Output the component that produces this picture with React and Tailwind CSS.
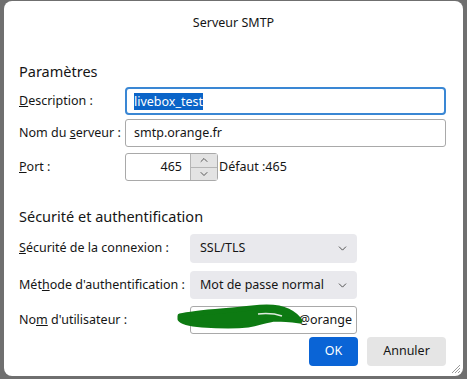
import { ChevronDown, ChevronUp } from "lucide-react";

/* ---------- small pieces ---------- */
const Label = ({ children, width = "w-[106px]" }) => (
  <div className={`${width} shrink-0 whitespace-nowrap text-[12.5px] text-[#151515]`}>{children}</div>
);

const TextBox = ({ value, className = "" }) => (
  <div
    className={`h-[28px] flex items-center px-[8px] bg-white border border-[#a9a9a9] rounded-[3px] text-[12.5px] text-[#151515] ${className}`}
  >
    {value}
  </div>
);

const SelectBox = ({ value, h = "h-[29px]" }) => (
  <div className={`w-[167px] ${h} flex items-center justify-between pl-[10px] pr-[8px] bg-[#e9e9ed] rounded-[4px] text-[12.5px] text-[#151515] whitespace-nowrap`}>
    <span>{value}</span>
    <ChevronDown size={13} strokeWidth={1.6} className="text-[#3c3c3c]" />
  </div>
);

const Scribble = () => (
  <svg
    className="absolute left-[176px] top-[303px] pointer-events-none"
    width="130"
    height="28"
    viewBox="0 0 130 28"
  >
    <path
      d="M4 13 C20 9 50 8 76 5 C92 3 104 4 112 8 C118 11 122 15 124 18 C116 17 108 16 100 16 C90 17 84 20 72 22 C56 24 40 23 26 22 C14 21 6 19 4 16 Z"
      fill="#0d7a12"
      stroke="#0d7a12"
      strokeWidth="5"
      strokeLinejoin="round"
    />
    <path d="M82 11 C92 10 100 11 106 13" stroke="#dfeadf" strokeWidth="1.5" fill="none" />
  </svg>
);

/* ---------- dialog ---------- */
export default function App() {
  return (
    <div className="w-[467px] h-[379px] bg-[#6f6f6f] pt-[1px] px-[4px] font-['Noto_Sans',sans-serif] relative overflow-hidden">
      <div className="relative h-[375px] bg-white rounded-[8px]">
        {/* Title */}
        <div className="h-[44px] flex items-center justify-center text-[12.5px] text-[#151515]">
          Serveur SMTP
        </div>

        <div className="pl-[15px] pr-[17px]">
          {/* Paramètres */}
          <div className="mt-[16px] h-[20px] leading-[20px] text-[14.5px] text-[#151515]">Paramètres</div>

          <div className="mt-[6px] flex flex-col gap-[4px]">
            <div className="flex items-center">
              <Label>
                <u>D</u>escription :
              </Label>
              <div className="flex-1 h-[28px] flex items-center px-[7px] border-2 border-[#3a87d4] rounded-[4px]">
                <span className="bg-[#0a64c8] text-white text-[12.5px] leading-[17px]">livebox_test</span>
              </div>
            </div>

            <div className="flex items-center">
              <Label>
                Nom du <u>s</u>erveur :
              </Label>
              <TextBox value="smtp.orange.fr" className="flex-1" />
            </div>

            <div className="flex items-center mt-[2px]">
              <Label>
                <u>P</u>ort :
              </Label>
              <div className="w-[93px] h-[28px] flex items-center bg-white border border-[#a9a9a9] rounded-[3px]">
                <span className="flex-1 text-right pr-[8px] text-[12.5px] text-[#151515]">465</span>
                <div className="w-[27px] h-full flex flex-col bg-[#e3e3e3] border-l border-[#b5b5b5]">
                  <div className="flex-1 flex items-center justify-center border-b border-[#b5b5b5]">
                    <ChevronUp size={12} strokeWidth={1.6} className="text-[#333]" />
                  </div>
                  <div className="flex-1 flex items-center justify-center">
                    <ChevronDown size={12} strokeWidth={1.6} className="text-[#333]" />
                  </div>
                </div>
              </div>
              <span className="ml-[1px] text-[12.5px] text-[#151515]">Défaut :465</span>
            </div>
          </div>

          {/* Sécurité et authentification */}
          <div className="mt-[25px] h-[20px] leading-[20px] text-[14.5px] text-[#151515]">
            Sécurité et authentification
          </div>

          <div className="mt-[8px] flex flex-col">
            <div className="flex items-center">
              <Label width="w-[171px]">
                <u>S</u>écurité de la connexion :
              </Label>
              <SelectBox value="SSL/TLS" />
            </div>

            <div className="flex items-center mt-[8px]">
              <Label width="w-[171px]">
                Mét<u>h</u>ode d'authentification :
              </Label>
              <SelectBox value="Mot de passe normal" h="h-[28px]" />
            </div>

            <div className="flex items-center mt-[7px]">
              <Label width="w-[171px]">
                No<u>m</u> d'utilisateur :
              </Label>
              <TextBox value="@orange" className="w-[167px] justify-end pr-[4px]" />
            </div>
          </div>

          {/* Buttons */}
          <div className="mt-[3px] flex justify-end gap-[9px]">
            <button className="w-[49px] h-[29px] rounded-[4px] bg-[#0a64d6] text-white text-[12.5px]">OK</button>
            <button className="w-[79px] h-[29px] rounded-[4px] bg-[#e5e5e5] text-[#151515] text-[12.5px]">
              Annuler
            </button>
          </div>
        </div>

        {/* resize grip */}
        <svg className="absolute right-[2px] bottom-[2px]" width="12" height="12" viewBox="0 0 12 12">
          <path d="M11 3 L3 11 M11 6 L6 11 M11 9 L9 11" stroke="#9a9a9a" strokeWidth="1" />
        </svg>
      </div>
      <Scribble />
    </div>
  );
}
